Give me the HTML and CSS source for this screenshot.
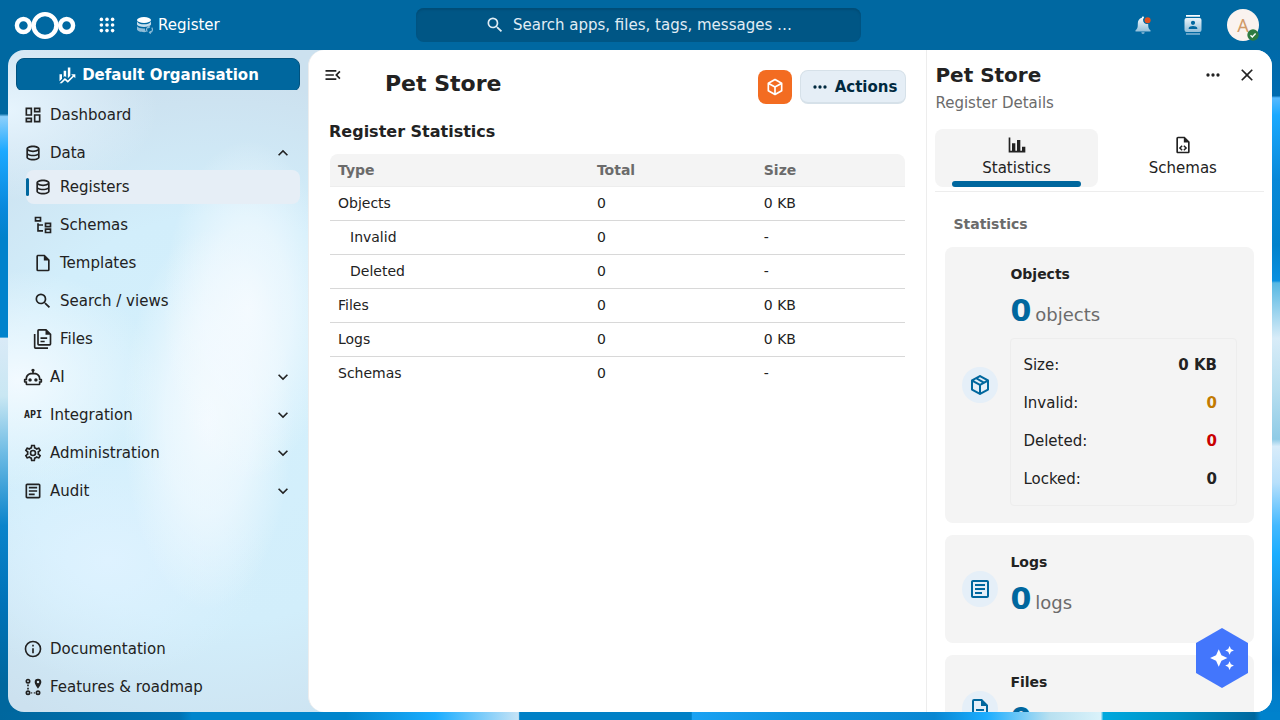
FILE: index.html
```html
<!DOCTYPE html>
<html lang="en">
<head>
    <meta charset="UTF-8">
    <meta name="viewport" content="width=device-width, initial-scale=1.0">
    <title>Pet Store - Register</title>
    <link rel="stylesheet" href="styles.css">
</head>
<body>
    <!-- shared icon shapes -->
    <svg class="sprite" aria-hidden="true">
        <symbol id="i-database" viewBox="0 0 24 24"><path d="M12 3C7.58 3 4 4.79 4 7V17C4 19.21 7.59 21 12 21S20 19.21 20 17V7C20 4.79 16.42 3 12 3M18 17C18 17.5 15.87 19 12 19S6 17.5 6 17V14.77C7.61 15.55 9.72 16 12 16S16.39 15.55 18 14.77V17M18 12.45C16.7 13.4 14.42 14 12 14C9.58 14 7.3 13.4 6 12.45V9.64C7.47 10.47 9.61 11 12 11C14.39 11 16.53 10.47 18 9.64V12.45M12 9C8.13 9 6 7.5 6 7S8.13 5 12 5C15.87 5 18 6.5 18 7S15.87 9 12 9Z"/></symbol>
        <symbol id="i-search" viewBox="0 0 24 24"><path d="M9.5,3A6.5,6.5 0 0,1 16,9.5C16,11.11 15.41,12.59 14.44,13.73L14.71,14H15.5L20.5,19L19,20.5L14,15.5V14.71L13.73,14.44C12.59,15.41 11.11,16 9.5,16A6.5,6.5 0 0,1 3,9.5A6.5,6.5 0 0,1 9.5,3M9.5,5C7,5 5,7 5,9.5C5,12 7,14 9.5,14C12,14 14,12 14,9.5C14,7 12,5 9.5,5Z"/></symbol>
        <symbol id="i-file" viewBox="0 0 24 24"><path d="M14,2H6A2,2 0 0,0 4,4V20A2,2 0 0,0 6,22H18A2,2 0 0,0 20,20V8L14,2M18,20H6V4H13V9H18V20Z"/></symbol>
        <symbol id="i-textbox" viewBox="0 0 24 24"><path d="M5,3C3.89,3 3,3.89 3,5V19C3,20.11 3.89,21 5,21H19C20.11,21 21,20.11 21,19V5C21,3.89 20.11,3 19,3H5M5,5H19V19H5V5M7,7V9H17V7H7M7,11V13H17V11H7M7,15V17H14V15H7Z"/></symbol>
        <symbol id="i-chevron" viewBox="0 0 24 24"><path d="M7.41,8.58L12,13.17L16.59,8.58L18,10L12,16L6,10L7.41,8.58Z"/></symbol>
        <symbol id="i-dots" viewBox="0 0 24 24"><path d="M16,12A2,2 0 0,1 18,10A2,2 0 0,1 20,12A2,2 0 0,1 18,14A2,2 0 0,1 16,12M10,12A2,2 0 0,1 12,10A2,2 0 0,1 14,12A2,2 0 0,1 12,14A2,2 0 0,1 10,12M4,12A2,2 0 0,1 6,10A2,2 0 0,1 8,12A2,2 0 0,1 6,14A2,2 0 0,1 4,12Z"/></symbol>
    </svg>

    <header class="header">
        <div class="header-start">
            <a class="logo" href="#" aria-label="Home">
                <svg width="62" height="30" viewBox="0 0 62 30" fill="none" stroke="#fff" stroke-width="4.4">
                    <circle cx="9.4" cy="15.5" r="6.5"/>
                    <circle cx="31" cy="15.5" r="11.4"/>
                    <circle cx="52.6" cy="15.5" r="6.5"/>
                </svg>
            </a>
            <button class="apps" aria-label="Apps">
                <svg width="16" height="16" viewBox="0 0 16 16" fill="#fff">
                    <circle cx="2.4" cy="2.4" r="1.8"/><circle cx="8" cy="2.4" r="1.8"/><circle cx="13.6" cy="2.4" r="1.8"/>
                    <circle cx="2.4" cy="8" r="1.8"/><circle cx="8" cy="8" r="1.8"/><circle cx="13.6" cy="8" r="1.8"/>
                    <circle cx="2.4" cy="13.6" r="1.8"/><circle cx="8" cy="13.6" r="1.8"/><circle cx="13.6" cy="13.6" r="1.8"/>
                </svg>
            </button>
            <a class="app-name" href="#">
                <svg width="18" height="18" viewBox="0 0 18 18">
                    <ellipse cx="8" cy="4" rx="7" ry="3" fill="#fff"/>
                    <path fill="#c5deed" d="M1 5.500C2 7.500 5 8.300 8 8.300S14 7.500 15 5.500V8.500C14.500 10 11.500 11 8 11S1.500 10 1 8.500Z"/>
                    <path fill="#8fbdd8" d="M1 10.200C2.500 12 5 12.600 9 12.400C9 14 9.500 15 10.500 16C6 16.500 1.500 15.500 1 13.500Z"/>
                    <path fill="none" stroke="#8fbdd8" stroke-width="1.200" d="M11.300 15.700A3 3 0 0 1 12.600 10.900M15.700 11.700A3 3 0 0 1 14.300 16.500M12.300 9.800L13.500 11L12.300 12.200M14.700 15.200L13.500 16.400L14.700 17.600"/>
                </svg>
                <span>Register</span>
            </a>
        </div>
        <button class="search">
            <svg class="icon"><use href="#i-search"/></svg>
            <span>Search apps, files, tags, messages …</span>
        </button>
        <div class="header-end">
            <button class="header-btn" aria-label="Notifications">
                <svg width="20" height="20" viewBox="0 0 20 20">
                    <defs><linearGradient id="bell" x1="0" y1="0" x2="0" y2="1"><stop offset="0" stop-color="#fff"/><stop offset="1" stop-color="#7fb3d3"/></linearGradient></defs>
                    <path fill="url(#bell)" d="M10 1.500C9.300 1.500 8.900 2 8.900 2.800C6 3.500 4.800 6 4.800 8.500C4.800 12.500 4.500 13.500 2.500 15.300V16.500H17.500V15.300C15.500 13.500 15.200 12.500 15.200 9H13A4 4 0 0 1 11 2.500C11 2 10.700 1.500 10 1.500ZM8.300 17.300H11.700A1.700 1.700 0 0 1 8.300 17.300Z"/>
                    <circle cx="14.600" cy="5.300" r="3" fill="#e0501f"/>
                </svg>
            </button>
            <button class="header-btn" aria-label="Contacts">
                <svg width="20" height="20" viewBox="0 0 20 20">
                    <path fill="url(#bell)" fill-rule="evenodd" d="M3 0H17V1.700H3ZM3.500 3H16.500A2 2 0 0 1 18.500 5V15A2 2 0 0 1 16.500 17H3.500A2 2 0 0 1 1.500 15V5A2 2 0 0 1 3.500 3ZM10 5.700A2.100 2.100 0 1 0 10 9.900A2.100 2.100 0 1 0 10 5.700ZM5.700 14H14.300V13C14.300 11.700 12 11 10 11S5.700 11.700 5.700 13ZM3 18.200H17V19.800H3Z"/>
                </svg>
            </button>
            <button class="header-btn" aria-label="Account">
                <span class="avatar">A
                    <svg class="status" viewBox="0 0 12 12"><circle cx="6" cy="6" r="5.700" fill="#2d7b41"/><path d="M3.500 6.200L5.300 7.900L8.600 4.500" fill="none" stroke="#fff" stroke-width="1.400"/></svg>
                </span>
            </button>
        </div>
    </header>

    <div class="content">
        <nav class="nav">
            <div class="nav-top">
                <button class="org">
                    <svg class="icon" viewBox="0 0 24 24"><path d="M6,16.500L3,19.440V11H6M11,14.660L9.430,13.320L8,14.640V7H11M16,13L13,16V3H16M18.810,12.810L17,11H22V16L20.210,14.210L13,21.360L9.530,18.340L5.750,22H3L9.470,15.660L13,18.640"/></svg>
                    <span>Default Organisation</span>
                </button>
            </div>
            <ul class="nav-list">
                <li><a class="nav-item" href="#"><svg class="icon" viewBox="0 0 24 24"><path d="M19,5V7H15V5H19M9,5V11H5V5H9M19,13V19H15V13H19M9,17V19H5V17H9M21,3H13V9H21V3M11,3H3V13H11V3M21,11H13V21H21V11M11,15H3V21H11V15Z"/></svg><span>Dashboard</span></a></li>
                <li>
                    <a class="nav-item open" href="#"><svg class="icon"><use href="#i-database"/></svg><span>Data</span><svg class="icon chevron"><use href="#i-chevron"/></svg></a>
                    <ul class="nav-list sub">
                        <li><a class="nav-item active" href="#"><svg class="icon"><use href="#i-database"/></svg><span>Registers</span></a></li>
                        <li><a class="nav-item" href="#"><svg class="icon" viewBox="0 0 24 24"><path d="M12 13H7V18H12V20H5V10H7V11H12V13M8 4V6H4V4H8M10 2H2V8H10V2M20 11V13H16V11H20M22 9H14V15H22V9M20 18V20H16V18H20M22 16H14V22H22V16Z"/></svg><span>Schemas</span></a></li>
                        <li><a class="nav-item" href="#"><svg class="icon"><use href="#i-file"/></svg><span>Templates</span></a></li>
                        <li><a class="nav-item" href="#"><svg class="icon"><use href="#i-search"/></svg><span>Search / views</span></a></li>
                        <li><a class="nav-item" href="#"><svg class="icon" viewBox="0 0 24 24"><path fill-rule="evenodd" d="M1 6H3V22H18V24H3A2 2 0 0 1 1 22V6M7 0H16L22 6V18A2 2 0 0 1 20 20H7A2 2 0 0 1 5 18V2A2 2 0 0 1 7 0M7 2V18H20V7H15V2H7M9 10H17V12H9V10M9 14H14V16H9V14"/></svg><span>Files</span></a></li>
                    </ul>
                </li>
                <li><a class="nav-item" href="#"><svg class="icon" viewBox="0 0 24 24"><path d="M17.500 15.500C17.500 16.610 16.610 17.500 15.500 17.500S13.500 16.610 13.500 15.500 14.400 13.500 15.500 13.500 17.500 14.400 17.500 15.500M8.500 13.500C7.400 13.500 6.500 14.400 6.500 15.500S7.400 17.500 8.500 17.500 10.500 16.610 10.500 15.500 9.610 13.500 8.500 13.500M23 15V18C23 18.550 22.550 19 22 19H21V20C21 21.110 20.110 22 19 22H5C3.900 22 3 21.110 3 20V19H2C1.450 19 1 18.550 1 18V15C1 14.450 1.450 14 2 14H3C3 10.130 6.130 7 10 7H11V5.730C10.400 5.390 10 4.740 10 4C10 2.900 10.900 2 12 2S14 2.900 14 4C14 4.740 13.600 5.390 13 5.730V7H14C17.870 7 21 10.130 21 14H22C22.550 14 23 14.450 23 15M21 16H19V14C19 11.240 16.760 9 14 9H10C7.240 9 5 11.240 5 14V16H3V17H5V20H19V17H21V16Z"/></svg><span>AI</span><svg class="icon chevron"><use href="#i-chevron"/></svg></a></li>
                <li><a class="nav-item" href="#"><span class="icon api" aria-hidden="true">API</span><span>Integration</span><svg class="icon chevron"><use href="#i-chevron"/></svg></a></li>
                <li><a class="nav-item" href="#"><svg class="icon" viewBox="0 0 24 24"><path d="M12,8A4,4 0 0,1 16,12A4,4 0 0,1 12,16A4,4 0 0,1 8,12A4,4 0 0,1 12,8M12,10A2,2 0 0,0 10,12A2,2 0 0,0 12,14A2,2 0 0,0 14,12A2,2 0 0,0 12,10M10,22C9.750,22 9.540,21.820 9.500,21.580L9.130,18.930C8.500,18.680 7.960,18.340 7.440,17.940L4.950,18.950C4.730,19.030 4.460,18.950 4.340,18.730L2.340,15.270C2.210,15.050 2.270,14.780 2.460,14.630L4.570,12.970L4.500,12L4.570,11L2.460,9.370C2.270,9.220 2.210,8.950 2.340,8.730L4.340,5.270C4.460,5.050 4.730,4.960 4.950,5.050L7.440,6.050C7.960,5.660 8.500,5.320 9.130,5.070L9.500,2.420C9.540,2.180 9.750,2 10,2H14C14.250,2 14.460,2.180 14.500,2.420L14.870,5.070C15.500,5.320 16.040,5.660 16.560,6.050L19.050,5.050C19.270,4.960 19.540,5.050 19.660,5.270L21.660,8.730C21.790,8.950 21.730,9.220 21.540,9.370L19.430,11L19.500,12L19.430,13L21.540,14.630C21.730,14.780 21.790,15.050 21.660,15.270L19.660,18.730C19.540,18.950 19.270,19.040 19.050,18.950L16.560,17.950C16.040,18.340 15.500,18.680 14.870,18.930L14.500,21.580C14.460,21.820 14.250,22 14,22H10M11.250,4L10.880,6.610C9.680,6.860 8.620,7.500 7.850,8.390L5.440,7.350L4.690,8.650L6.800,10.200C6.400,11.370 6.400,12.640 6.800,13.800L4.680,15.360L5.430,16.660L7.860,15.620C8.630,16.500 9.680,17.140 10.870,17.380L11.240,20H12.760L13.130,17.390C14.320,17.140 15.370,16.500 16.140,15.620L18.570,16.660L19.320,15.360L17.200,13.810C17.600,12.640 17.600,11.370 17.200,10.200L19.310,8.650L18.560,7.350L16.150,8.390C15.380,7.500 14.320,6.860 13.120,6.620L12.750,4H11.250Z"/></svg><span>Administration</span><svg class="icon chevron"><use href="#i-chevron"/></svg></a></li>
                <li><a class="nav-item" href="#"><svg class="icon"><use href="#i-textbox"/></svg><span>Audit</span><svg class="icon chevron"><use href="#i-chevron"/></svg></a></li>
            </ul>
            <ul class="nav-list nav-bottom">
                <li><a class="nav-item" href="#"><svg class="icon" viewBox="0 0 24 24"><path d="M11,9H13V7H11M12,20C7.590,20 4,16.410 4,12C4,7.590 7.590,4 12,4C16.410,4 20,7.590 20,12C20,16.410 16.410,20 12,20M12,2A10,10 0 0,0 2,12A10,10 0 0,0 12,22A10,10 0 0,0 22,12A10,10 0 0,0 12,2M11,17H13V11H11V17Z"/></svg><span>Documentation</span></a></li>
                <li><a class="nav-item" href="#">
                    <svg class="icon" viewBox="0 0 24 24">
                        <g fill="none" stroke="currentColor" stroke-width="2"><circle cx="6" cy="5" r="2"/><circle cx="6" cy="19" r="2"/><circle cx="18" cy="19" r="2"/><path d="M6 9V11M6 13V15M10 19H11M13 19H14"/></g>
                        <path fill-rule="evenodd" d="M18 2A4 4 0 0 0 14 6C14 9 18 14 18 14S22 9 22 6A4 4 0 0 0 18 2M18 4.500A1.500 1.500 0 1 1 18 7.500A1.500 1.500 0 1 1 18 4.500"/>
                    </svg>
                    <span>Features &amp; roadmap</span></a></li>
            </ul>
        </nav>

        <main class="main">
            <button class="icon-btn nav-toggle" aria-label="Close navigation">
                <svg class="icon" viewBox="0 0 24 24"><path d="M21,15.610L19.590,17L14.580,12L19.590,7L21,8.390L17.440,12L21,15.610M3,6H16V8H3V6M3,13V11H13V13H3M3,18V16H16V18H3Z"/></svg>
            </button>
            <div class="page-header">
                <h1>Pet Store</h1>
                <div class="page-actions">
                    <button class="cube" aria-label="Open objects">
                        <svg class="icon" viewBox="0 0 24 24"><path d="M21,16.500C21,16.880 20.790,17.210 20.470,17.380L12.570,21.820C12.410,21.940 12.210,22 12,22C11.790,22 11.590,21.940 11.430,21.820L3.530,17.380C3.210,17.210 3,16.880 3,16.500V7.500C3,7.120 3.210,6.790 3.530,6.620L11.430,2.180C11.590,2.060 11.790,2 12,2C12.210,2 12.410,2.060 12.570,2.180L20.470,6.620C20.790,6.790 21,7.120 21,7.500V16.500M12,4.150L6.040,7.500L12,10.850L17.960,7.500L12,4.150M5,15.910L11,19.290V12.580L5,9.210V15.910M19,15.910V9.210L13,12.580V19.290L19,15.910Z"/></svg>
                    </button>
                    <button class="actions">
                        <svg class="icon"><use href="#i-dots"/></svg>
                        <span>Actions</span>
                    </button>
                </div>
            </div>
            <h2>Register Statistics</h2>
            <table class="stats">
                <thead>
                    <tr><th class="col-type">Type</th><th class="col-total">Total</th><th>Size</th></tr>
                </thead>
                <tbody>
                    <tr><td>Objects</td><td>0</td><td>0 KB</td></tr>
                    <tr class="sub-row"><td>Invalid</td><td>0</td><td>-</td></tr>
                    <tr class="sub-row"><td>Deleted</td><td>0</td><td>-</td></tr>
                    <tr><td>Files</td><td>0</td><td>0 KB</td></tr>
                    <tr><td>Logs</td><td>0</td><td>0 KB</td></tr>
                    <tr><td>Schemas</td><td>0</td><td>-</td></tr>
                </tbody>
            </table>
        </main>

        <aside class="sidebar">
            <div class="sidebar-header">
                <div class="sidebar-title">
                    <h2>Pet Store</h2>
                    <p>Register Details</p>
                </div>
                <button class="icon-btn" aria-label="More"><svg class="icon"><use href="#i-dots"/></svg></button>
                <button class="icon-btn" aria-label="Close sidebar"><svg class="icon" viewBox="0 0 24 24"><path d="M19,6.410L17.590,5L12,10.590L6.410,5L5,6.410L10.590,12L5,17.590L6.410,19L12,13.410L17.590,19L19,17.590L13.410,12L19,6.410Z"/></svg></button>
            </div>
            <div class="tabs">
                <button class="tab selected">
                    <svg class="icon" viewBox="0 0 24 24"><path d="M22,21H2V3H4V19H6V10H10V19H12V6H16V19H18V14H22V21Z"/></svg>
                    <span>Statistics</span>
                </button>
                <button class="tab">
                    <svg class="icon" viewBox="0 0 24 24"><path d="M14 2H6C4.890 2 4 2.900 4 4V20C4 21.110 4.890 22 6 22H18C19.110 22 20 21.110 20 20V8L14 2M18 20H6V4H13V9H18V20M9.540 15.650L11.630 17.740L10.350 19L7 15.650L10.350 12.300L11.630 13.560L9.540 15.650M17 15.650L13.650 19L12.380 17.740L14.470 15.650L12.380 13.560L13.650 12.300L17 15.650Z"/></svg>
                    <span>Schemas</span>
                </button>
            </div>
            <div class="sidebar-body">
                <h3>Statistics</h3>
                <div class="card">
                    <div class="card-icon"><svg class="icon" viewBox="0 0 24 24"><path d="M21,16.500C21,16.880 20.790,17.210 20.470,17.380L12.570,21.820C12.410,21.940 12.210,22 12,22C11.790,22 11.590,21.940 11.430,21.820L3.530,17.380C3.210,17.210 3,16.880 3,16.500V7.500C3,7.120 3.210,6.790 3.530,6.620L11.430,2.180C11.590,2.060 11.790,2 12,2C12.210,2 12.410,2.060 12.570,2.180L20.470,6.620C20.790,6.790 21,7.120 21,7.500V16.500M12,4.150L10.110,5.220L16,8.610L17.960,7.500L12,4.150M6.040,7.500L12,10.850L13.960,9.750L8.080,6.350L6.040,7.500M5,15.910L11,19.290V12.580L5,9.210V15.910M19,15.910V9.210L13,12.580V19.290L19,15.910Z"/></svg></div>
                    <div class="card-content">
                        <h4>Objects</h4>
                        <div class="count"><strong>0</strong><span>objects</span></div>
                        <dl class="breakdown">
                            <div><dt>Size:</dt><dd>0 KB</dd></div>
                            <div><dt>Invalid:</dt><dd class="warning">0</dd></div>
                            <div><dt>Deleted:</dt><dd class="error">0</dd></div>
                            <div><dt>Locked:</dt><dd>0</dd></div>
                        </dl>
                    </div>
                </div>
                <div class="card">
                    <div class="card-icon"><svg class="icon"><use href="#i-textbox"/></svg></div>
                    <div class="card-content">
                        <h4>Logs</h4>
                        <div class="count"><strong>0</strong><span>logs</span></div>
                    </div>
                </div>
                <div class="card">
                    <div class="card-icon"><svg class="icon" viewBox="0 0 24 24"><path d="M6,2A2,2 0 0,0 4,4V20A2,2 0 0,0 6,22H18A2,2 0 0,0 20,20V8L14,2H6M6,4H13V9H18V20H6V4M8,12V14H16V12H8M8,16V18H13V16H8Z"/></svg></div>
                    <div class="card-content">
                        <h4>Files</h4>
                        <div class="count"><strong>0</strong><span>files</span></div>
                    </div>
                </div>
            </div>
        </aside>
    </div>

    <button class="assistant" aria-label="Assistant">
        <svg width="26" height="26" viewBox="0 0 24 24"><path d="M19,1L17.740,3.750L15,5L17.740,6.260L19,9L20.250,6.260L23,5L20.250,3.750M9,4L6.500,9.500L1,12L6.500,14.500L9,20L11.500,14.500L17,12L11.500,9.500M19,15L17.740,17.740L15,19L17.740,20.250L19,23L20.250,20.250L23,19L20.250,17.740"/></svg>
    </button>
</body>
</html>
```
FILE: styles.css
```css
* {
    box-sizing: border-box;
}
body {
    display: flex;
    flex-direction: column;
    height: 100vh;
    margin: 0;
    overflow: hidden;
    font-family: "DejaVu Sans", sans-serif;
    font-size: 15px;
    line-height: 24px;
    color: #222;
    background-color: #0068a1;
    /* wallpaper: bottom, left and right bands */
    background-image:
        linear-gradient(to right, #00679e 0, #0072b3 14%, #0085cc 15%, #0085cc 27%, #1badff 34%, #c5e3f6 40.5%, #0080c6 40.6%, #0080c6 54%, #1ba2f3 54.1%, #0d93e0 62%, #0a87d2 73%, #1badff 77%, #b8e0f0 82%, #daf2fa 86%, #00a9de 86.2%, #0090c5 92%, #00679e 98%, #0082cc 98.5%),
        linear-gradient(to bottom, #0068a1 0, #0068a1 15.8%, #8ccffb 16.2%, #1da9ff 21%, #0888dc 29%, #0082cc 33%, #0082cc 46.8%, #d9eaf7 47%, #c9e7f3 55%, #6dbbe4 63%, #0a84cb 73%, #0072b8 84%, #00679e 95%),
        linear-gradient(to bottom, #0068a1 0, #006bb0 13.3%, #56b9ff 13.6%, #1ba9ff 16%, #0888d8 25%, #0082cc 34%, #0a90e0 39%, #57b8e3 39.3%, #d8ecf8 47%, #b8dff0 54%, #8fcbe6 61%, #d8ecfa 62%, #b8e0fb 67%, #44b9ff 73%, #1badff 77%, #1090e0 84%, #0078c8 92%, #0082cc 100%);
    background-size: 100% 8px, 24px 100%, 24px 100%;
    background-position: left bottom, left top, right top;
    background-repeat: no-repeat;
}
h1, h2, h3, h4, p, ul, dl, dd {
    margin: 0;
    padding: 0;
}
ul {
    list-style: none;
}
a {
    color: inherit;
    text-decoration: none;
}
button {
    padding: 0;
    border: none;
    background: none;
    font: inherit;
    color: inherit;
    cursor: pointer;
}
.sprite {
    display: none;
}
.icon {
    width: 20px;
    height: 20px;
    flex: none;
    fill: currentColor;
}

/* Header */
.header {
    display: flex;
    align-items: center;
    flex: none;
    height: 50px;
    padding: 0 12px 0 9px;
    background-color: #0068a1;
    color: #fff;
}
.header-start,
.header-end {
    display: flex;
    align-items: center;
    flex: 1;
}
.header-end {
    justify-content: flex-end;
}
.logo {
    display: flex;
    padding-left: 5px;
}
.apps {
    display: flex;
    justify-content: center;
    width: 34px;
    margin-left: 14px;
}
.app-name {
    display: flex;
    align-items: center;
    gap: 4px;
    margin-left: 12px;
}
.search {
    display: flex;
    align-items: center;
    justify-content: center;
    gap: 8px;
    flex: 0 1 445px;
    height: 34px;
    border-radius: 8px;
    background-color: #005685;
    box-shadow: inset 0 2px 2px #004d77;
    color: #e0edf5;
}
.header-btn {
    display: flex;
    align-items: center;
    justify-content: center;
    width: 50px;
    height: 50px;
}
.avatar {
    position: relative;
    width: 32px;
    height: 32px;
    border-radius: 50%;
    background-color: #faf3ef;
    font-family: "Noto Sans", sans-serif;
    font-size: 18px;
    line-height: 32px;
    color: #d09a68;
}
.status {
    position: absolute;
    right: 0;
    bottom: 0;
    width: 12px;
    height: 12px;
}

/* Content */
.content {
    display: flex;
    flex: 1;
    min-height: 0;
    margin: 0 8px 8px;
    border-radius: 16px;
    overflow: hidden;
    background-color: #cce1ef;
    background-image:
        radial-gradient(ellipse 85px 170px at 240px 260px, #f6fbffe6 0, #f6fbff99 50%, #f6fbff00 100%),
        radial-gradient(ellipse 85px 190px at 200px 370px, #f6fbffe6 0, #f6fbff99 50%, #f6fbff00 100%),
        radial-gradient(ellipse 140px 110px at 10px 330px, #f2faff 0, #f2faff00 100%),
        radial-gradient(ellipse 150px 90px at 0 60px, #e6f4fd 0, #e6f4fd00 100%),
        radial-gradient(ellipse 160px 120px at 100px 510px, #def2ff 0, #def2ff00 100%),
        radial-gradient(ellipse 360px 340px at 210px 370px, #d4f0fc 0, #d2eefb 60%, #cce1ef00 100%);
}
.nav {
    display: flex;
    flex-direction: column;
    flex: 0 0 300px;
    padding: 8px;
}
.nav-top {
    height: 32px;
    margin-bottom: 8px;
    overflow: hidden;
}
.org {
    display: flex;
    align-items: center;
    justify-content: center;
    gap: 5px;
    width: 100%;
    height: 34px;
    border: 1px solid #00527f;
    border-radius: 8px;
    background-color: #00679e;
    font-weight: bold;
    color: #fff;
}
.nav-list {
    display: flex;
    flex-direction: column;
    gap: 4px;
}
.nav-bottom {
    margin-top: auto;
}
.sub {
    padding-left: 10px;
}
.nav-item {
    display: flex;
    align-items: center;
    gap: 7px;
    height: 34px;
    padding: 0 7px;
    border-radius: 8px;
}
.active {
    position: relative;
    background-color: #e6eef6;
}
.active::before {
    content: "";
    position: absolute;
    left: 0;
    top: 8px;
    bottom: 8px;
    width: 3px;
    border-radius: 2px;
    background-color: #00679e;
}
.chevron {
    margin-left: auto;
}
.open .chevron {
    transform: rotate(180deg);
}
.api {
    font-family: "DejaVu Sans Mono", monospace;
    font-size: 10px;
    font-weight: bold;
    line-height: 20px;
    text-align: center;
}

/* Main */
.main {
    position: relative;
    flex: 1;
    min-width: 0;
    padding: 20px;
    border-left: 1px solid #ededed;
    border-radius: 16px 0 0 16px;
    background-color: #fff;
}
.icon-btn {
    display: flex;
    align-items: center;
    justify-content: center;
    width: 34px;
    height: 34px;
}
.nav-toggle {
    position: absolute;
    left: 7px;
    top: 8px;
}
.page-header {
    display: flex;
    justify-content: space-between;
    margin-bottom: 16px;
}
.page-header h1 {
    padding-left: 56px;
    font-size: 22px;
    line-height: 28px;
}
.page-actions {
    display: flex;
    gap: 8px;
}
.cube {
    display: flex;
    align-items: center;
    justify-content: center;
    width: 34px;
    height: 34px;
    border-radius: 8px;
    background-color: #f36c21;
    color: #fff;
}
.actions {
    display: flex;
    align-items: center;
    gap: 5px;
    height: 34px;
    padding: 0 8px 0 9px;
    border: 1px solid #d6e1e9;
    border-bottom-width: 2px;
    border-radius: 8px;
    background-color: #e5eef6;
    font-weight: bold;
    color: #00293f;
}
.main h2 {
    margin-bottom: 9px;
    font-size: 16px;
}
.stats {
    width: 100%;
    border: 1px solid transparent;
    border-spacing: 0;
    font-size: 14px;
    line-height: 17px;
    text-align: left;
}
.stats th,
.stats td {
    padding: 8px;
    border-bottom: 1px solid #d8d8d8;
}
.stats th {
    background-color: #f4f4f4;
    border-bottom-color: #ededed;
    line-height: 16px;
    color: #6b6b6b;
}
.stats th:first-child {
    border-top-left-radius: 8px;
}
.stats th:last-child {
    border-top-right-radius: 8px;
}
.stats tr:last-child td {
    border-bottom: none;
}
.stats .sub-row td:first-child {
    padding-left: 20px;
}
.col-type {
    width: 45%;
}
.col-total {
    width: 29%;
}

/* Sidebar */
.sidebar {
    flex: 0 0 27vw;
    min-width: 300px;
    padding: 8px;
    border-left: 1px solid #ededed;
    background-color: #fff;
    overflow-y: auto;
    scrollbar-width: none;
}
.sidebar-header {
    display: flex;
}
.sidebar-title {
    flex: 1;
}
.sidebar-title h2 {
    font-size: 20px;
    line-height: 34px;
}
.sidebar-title p {
    line-height: 22px;
    color: #6b6b6b;
}
.tabs {
    display: flex;
    gap: 4px;
    margin-top: 15px;
    padding-bottom: 4px;
    border-bottom: 1px solid #ededed;
}
.tab {
    position: relative;
    display: flex;
    flex: 1;
    flex-direction: column;
    align-items: center;
    gap: 1px;
    height: 58px;
    padding-top: 6px;
    border-radius: 8px;
}
.tab.selected {
    background-color: #f4f4f4;
}
.tab.selected::after {
    content: "";
    position: absolute;
    left: 10%;
    right: 10%;
    bottom: 0;
    height: 6px;
    border-radius: 3px;
    background-color: #00679e;
}
.sidebar-body {
    padding: 20px 10px;
}
.sidebar-body h3 {
    padding-left: 8px;
    margin-bottom: 11px;
    font-size: 14px;
    color: #6b6b6b;
}
.card {
    display: flex;
    align-items: center;
    gap: 12px;
    margin-bottom: 12px;
    padding: 17px;
    border-radius: 8px;
    background-color: #f4f4f4;
}
.card-icon {
    display: flex;
    align-items: center;
    justify-content: center;
    flex: none;
    width: 36px;
    height: 36px;
    border-radius: 50%;
    background-color: #e5eff8;
    color: #00679e;
}
.card-icon .icon {
    width: 24px;
    height: 24px;
}
.card-content {
    flex: 1;
}
.card h4 {
    margin-bottom: 7px;
    font-size: 14px;
    line-height: 20px;
}
.count {
    display: flex;
    align-items: baseline;
    gap: 4px;
    margin-bottom: 3px;
    font-size: 18px;
    line-height: 40px;
    color: #6b6b6b;
}
.count strong {
    font-size: 30px;
    color: #00679e;
}
.breakdown {
    padding: 7px 19px 7px 12px;
    border: 1px solid #ededed;
    border-radius: 4px;
}
.breakdown div {
    display: flex;
    justify-content: space-between;
    line-height: 38px;
}
.breakdown dd {
    font-weight: bold;
}
.breakdown .warning {
    color: #c27a00;
}
.breakdown .error {
    color: #c90000;
}

/* Floating assistant button */
.assistant {
    position: fixed;
    right: 32px;
    bottom: 32px;
    display: flex;
    align-items: center;
    justify-content: center;
    width: 52px;
    height: 60px;
    clip-path: polygon(50% 0, 100% 25%, 100% 75%, 50% 100%, 0 75%, 0 25%);
    background-color: #4376fc;
    fill: #fff;
}
```
